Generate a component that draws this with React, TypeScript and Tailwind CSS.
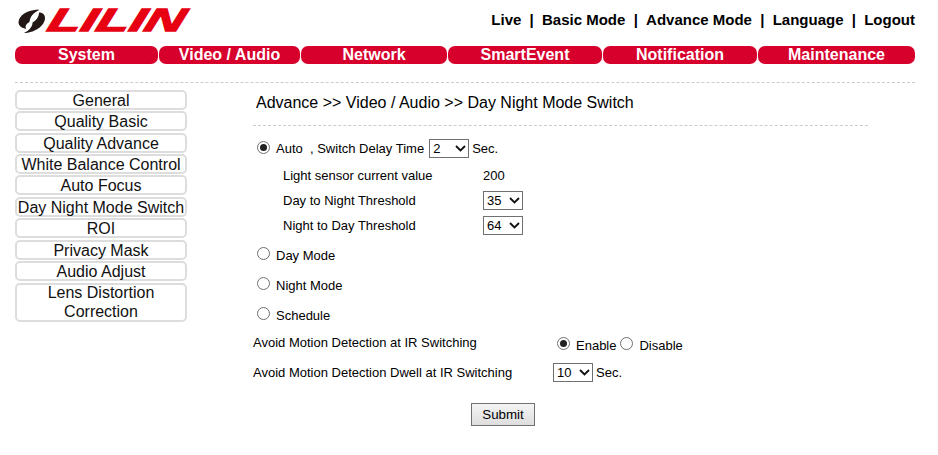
const sideItems = ["General","Quality Basic","Quality Advance","White Balance Control","Auto Focus","Day Night Mode Switch","ROI","Privacy Mask","Audio Adjust"];
const navItems = [
  { label: "System", cls: "w-[143px]" },
  { label: "Video / Audio", cls: "w-[141px]" },
  { label: "Network", cls: "w-[146px]" },
  { label: "SmartEvent", cls: "w-[154px]" },
  { label: "Notification", cls: "w-[154px]" },
  { label: "Maintenance", cls: "w-[157px]" },
];

function Radio({ on = false, lift = "" }: { on?: boolean; lift?: string }) {
  return (
    <span className={`w-[13px] h-[13px] rounded-full border border-[#707070] bg-white flex items-center justify-center shrink-0 ${lift}`}>
      {on && <span className="w-[7px] h-[7px] rounded-full bg-[#222]" />}
    </span>
  );
}

function Sel({ value, opts }: { value: string; opts: string[] }) {
  return (
    <span className="relative inline-flex w-[40px] h-[19px]">
      <select defaultValue={value} className="appearance-none w-full h-full border border-[#707070] bg-white text-[13px] text-black pl-[3px]">
        {opts.map((o) => <option key={o}>{o}</option>)}
      </select>
      <svg width="11" height="7" viewBox="0 0 11 7" className="absolute right-[3px] top-[6px] pointer-events-none">
        <path d="M1 1 L5.5 5.5 L10 1" fill="none" stroke="#111" strokeWidth="1.8" />
      </svg>
    </span>
  );
}

function Logo() {
  return (
    <div className="flex items-center h-[25px] w-[175px]">
      <svg width="27" height="24" viewBox="0 0 27 24" className="shrink-0">
        <path d="M20 0.5 C 10 1 1 6 0.5 13 C 0.5 17 4 19 8 20 C 7 17 8 15 11.5 13 C 12 8 15 4 21 1 Z" fill="#231815" />
        <path d="M6 24 C 16 24 27 17 27 9 C 27 5 24 3.5 21 3.5 C 21 7 19 11 14.5 13.5 C 15 17 11 22 6 24 Z" fill="#231815" />
      </svg>
      <span className="ml-[4px] origin-left inline-block scale-x-[1.7] -skew-x-[10deg] [-webkit-text-stroke:1.3px_#e60012] font-['Liberation_Sans',sans-serif] font-bold italic text-[32px] leading-[25px] text-[#e60012]">LILIN</span>
    </div>
  );
}

export default function App() {
  return (
    <div className="w-[938px] h-[455px] bg-white text-black font-['Liberation_Sans',Arial,sans-serif] overflow-hidden px-[15px]">
      <header className="flex justify-between w-[900px] h-[46px] pt-[8px]">
        <div className="ml-[3px]"><Logo /></div>
        <div className="flex gap-[8.25px] text-[15px] font-bold leading-[24px] whitespace-pre">
          <span>Live</span><span>|</span><span>Basic Mode</span><span>|</span><span>Advance Mode</span><span>|</span><span>Language</span><span>|</span><span>Logout</span>
        </div>
      </header>
      <nav className="flex w-[900px] h-[18px] gap-[1px]">
        {navItems.map((n) => (
          <div key={n.label} className={`${n.cls} rounded-[7px] bg-[#d7002d] text-white font-bold text-[16px] leading-[18px] text-center`}>{n.label}</div>
        ))}
      </nav>
      <div className="mt-[18px] border-t border-dashed border-[#cccccc] w-[900px]" />
      <div className="flex mt-[7px]">
        <aside className="w-[172px] flex flex-col gap-[1.37px] shrink-0">
          {sideItems.map((s) => (
            <div key={s} className="h-[20px] border-2 border-[#dddddd] rounded-[5px] text-[16px] leading-[18px] text-center whitespace-nowrap text-[#111]">{s}</div>
          ))}
          <div className="h-[39px] mt-[0.4px] border-2 border-[#dddddd] rounded-[5px] text-[16px] leading-[19px] text-center text-[#111]"><div className="-mt-[2px]">Lens Distortion<br />Correction</div></div>
        </aside>
        <main className="ml-[66px] w-[615px] text-[13px] leading-[15px]">
          <h1 className="text-[16px] leading-[18px] font-normal pl-[3px] pt-[4px]">Advance &gt;&gt; Video / Audio &gt;&gt; Day Night Mode Switch</h1>
          <div className="mt-[13px] border-t border-dashed border-[#cccccc]" />
          <div className="flex items-center h-[19px] mt-[13px] pl-[4px]">
            <Radio on lift="-mt-[2px]" /><span className="ml-[6px]">Auto&nbsp;&nbsp;, Switch Delay Time</span>
            <span className="ml-[5px] flex"><Sel value="2" opts={["1","2","3"]} /></span><span className="ml-[3px]">Sec.</span>
          </div>
          <div className="flex items-center h-[25px] mt-[5px] pl-[30px]"><span className="w-[200px]">Light sensor current value</span><span>200</span></div>
          <div className="flex items-center h-[25px] pl-[30px]"><span className="w-[200px]">Day to Night Threshold</span><Sel value="35" opts={["35"]} /></div>
          <div className="flex items-center h-[25px] pl-[30px]"><span className="w-[200px]">Night to Day Threshold</span><Sel value="64" opts={["64"]} /></div>
          <div className="flex items-center h-[30px] mt-[2px] pl-[4px]"><Radio lift="-mt-[4px]" /><span className="ml-[6px]">Day Mode</span></div>
          <div className="flex items-center h-[30px] pl-[4px]"><Radio lift="-mt-[4px]" /><span className="ml-[6px]">Night Mode</span></div>
          <div className="flex items-center h-[30px] pl-[4px]"><Radio lift="-mt-[4px]" /><span className="ml-[6px]">Schedule</span></div>
          <div className="flex items-center h-[24px]">
            <span className="w-[304px]">Avoid Motion Detection at IR Switching</span>
            <Radio on lift="mt-[2px]" /><span className="ml-[6px] mt-[6px]">Enable</span><span className="ml-[4px] mt-[2px]"><Radio /></span><span className="ml-[6px] mt-[6px]">Disable</span>
          </div>
          <div className="flex items-center h-[24px] mt-[6px]">
            <span className="w-[300px]">Avoid Motion Detection Dwell at IR Switching</span>
            <Sel value="10" opts={["10"]} /><span className="ml-[3px]">Sec.</span>
          </div>
          <div className="flex justify-center w-[500px] mt-[19px]">
            <button className="w-[64px] h-[23px] border border-[#707070] bg-gradient-to-b from-[#f4f4f4] to-[#dedede] text-[13.33px] text-black">Submit</button>
          </div>
        </main>
      </div>
    </div>
  );
}
